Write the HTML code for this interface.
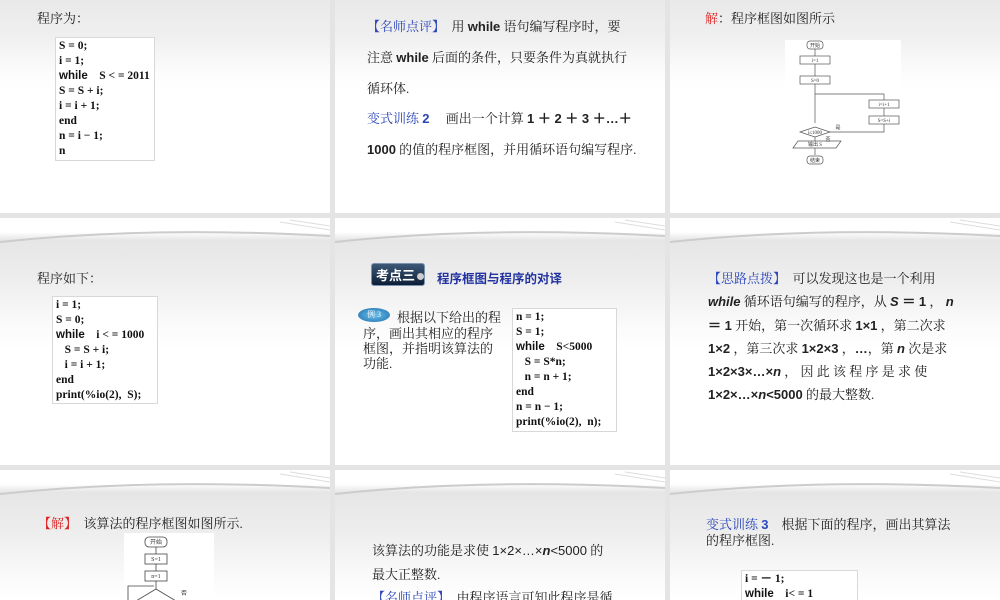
<!DOCTYPE html>
<html><head><meta charset="utf-8"><style>
*{margin:0;padding:0;box-sizing:border-box}
body{width:1000px;height:600px;background:#e4e4e4;position:relative;overflow:hidden;font-family:"Liberation Serif","Noto Serif CJK SC",serif;color:#222}
.s{position:absolute;width:330px;overflow:hidden;background:#fff}
.r1{top:0;height:213px;background:linear-gradient(#e9e9e9 0,#efefef 35px,#fbfbfb 70px,#fff 90px)}
.r2{top:218px;height:247px;background:linear-gradient(#fff 0,#fff 14px,#e6e6e6 22px,#ededed 60px,#fbfbfb 110px,#fff 130px)}
.r3{top:470px;height:130px;background:linear-gradient(#fff 0,#fff 14px,#e6e6e6 22px,#ededed 60px,#fbfbfb 110px,#fff 130px)}
.c1{left:0}.c2{left:335px}.c3{left:670px}
.t{position:absolute;font-size:13px;white-space:nowrap;line-height:16px}
.code{position:absolute;background:#fff;border:1px solid #d8d8d8;font-family:"Liberation Serif",serif;font-weight:bold;font-size:11.5px;line-height:15px;padding:1px 3px;white-space:pre;color:#111;overflow:hidden}
.code b{font-family:"Liberation Sans",sans-serif}
.sw{position:absolute;left:0;top:0}
.blue{color:#2b46b8}.red{color:#d22}
b.a{font-family:"Liberation Sans",sans-serif}
</style></head><body>
<!-- row1 -->
<div class="s r1 c1">
<div class="t" style="left:37px;top:11px">程序为：</div>
<div class="code" style="left:55px;top:37px;width:100px;height:124px">S = 0;
i = 1;
<b>while</b>    S &lt; = 2011
S = S + i;
i = i + 1;
end
n = i − 1;
n</div>
</div>
<div class="s r1 c2">
<div class="t" style="left:32px;top:19px"><span class="blue">【名师点评】</span>　用 <b class="a">while</b> 语句编写程序时，要</div>
<div class="t" style="left:32px;top:50px">注意 <b class="a">while</b> 后面的条件，只要条件为真就执行</div>
<div class="t" style="left:32px;top:81px">循环体.</div>
<div class="t" style="left:32px;top:111px"><span class="blue">变式训练 <b class="a">2</b></span>　 画出一个计算 <b class="a">1 ＋ 2 ＋ 3 ＋…＋</b></div>
<div class="t" style="left:32px;top:142px"><b class="a">1000</b> 的值的程序框图，并用循环语句编写程序.</div>
</div>
<div class="s r1 c3">
<div class="t" style="left:35px;top:11px"><span class="red">解</span>：程序框图如图所示</div>
<svg style="position:absolute;left:115px;top:40px" width="116" height="135" viewBox="0 0 116 135" font-size="5" font-family="Liberation Serif">
<rect width="116" height="135" fill="#fff"/>
<g fill="none" stroke="#555" stroke-width=".7">
<rect x="22" y="1" width="16" height="8" rx="3"/>
<rect x="15" y="16" width="30" height="8"/>
<rect x="15" y="36" width="30" height="8"/>
<rect x="84" y="60" width="30" height="8"/>
<rect x="84" y="76" width="30" height="8"/>
<path d="M30 9V16M30 24V36M30 44V83M30 54H99V60M99 68V76M99 84V92H45M30 97V101M30 108V115"/>
<path d="M15 92L30 87L45 92L30 97Z"/>
<path d="M8 108L13 101H56L51 108Z"/>
<rect x="22" y="116" width="16" height="8" rx="3"/>
</g>
<g fill="#333" text-anchor="middle"><text x="30" y="7">开始</text><text x="30" y="22">i=1</text><text x="30" y="42">S=0</text><text x="99" y="66">i=i+1</text><text x="99" y="82">S=S+i</text><text x="30" y="94">i≤1000</text><text x="30" y="106">输出 S</text><text x="30" y="122">结束</text><text x="53" y="89">是</text><text x="43" y="101">否</text></g>
</svg>
</div>
<!-- row2 -->
<div class="s r2 c1">
<svg class="sw" width="330" height="30"><path d="M0 24Q150 8 330 18" stroke="#ccc" stroke-width="2" fill="none"/><path d="M280 4L330 12M290 2L330 8" stroke="#ddd" fill="none"/></svg>
<div class="t" style="left:37px;top:53px">程序如下：</div>
<div class="code" style="left:52px;top:78px;width:106px;height:108px">i = 1;
S = 0;
<b>while</b>    i &lt; = 1000
   S = S + i;
   i = i + 1;
end
print(%io(2),  S);</div>
</div>
<div class="s r2 c2">
<svg class="sw" width="330" height="30"><path d="M0 24Q150 8 330 18" stroke="#ccc" stroke-width="2" fill="none"/><path d="M280 4L330 12M290 2L330 8" stroke="#ddd" fill="none"/></svg>
<div style="position:absolute;left:36px;top:45px;width:54px;height:23px;border-radius:3px;background:linear-gradient(#3d5878,#0d1e36);border:1px solid #7a93b0;color:#fff;font-weight:bold;font-size:13px;line-height:21px;padding-left:4px;font-family:'Noto Sans CJK SC',sans-serif">考点三<span style="display:inline-block;width:7px;height:7px;border-radius:50%;background:#ccc;margin-left:2px"></span></div>
<div class="t" style="left:102px;top:52px;color:#2233a0;font-family:'Noto Sans CJK SC',sans-serif;font-size:12.5px;font-weight:bold">程序框图与程序的对译</div>
<div style="position:absolute;left:23px;top:90px;width:32px;height:14px;border-radius:50%;background:radial-gradient(#6fc0e8,#1a6fb0);color:#fff;font-size:8px;text-align:center;line-height:14px">例 3</div>
<div class="t" style="left:62px;top:92px">根据以下给出的程</div>
<div class="t" style="left:28px;top:108px">序，画出其相应的程序</div>
<div class="t" style="left:28px;top:123px">框图，并指明该算法的</div>
<div class="t" style="left:28px;top:138px">功能.</div>
<div class="code" style="left:177px;top:90px;width:105px;height:124px">n = 1;
S = 1;
<b>while</b>    S&lt;5000
   S = S*n;
   n = n + 1;
end
n = n − 1;
print(%io(2),  n);</div>
</div>
<div class="s r2 c3">
<svg class="sw" width="330" height="30"><path d="M0 24Q150 8 330 18" stroke="#ccc" stroke-width="2" fill="none"/><path d="M280 4L330 12M290 2L330 8" stroke="#ddd" fill="none"/></svg>
<div class="t" style="left:38px;top:53px"><span class="blue">【思路点拨】</span>　可以发现这也是一个利用</div>
<div class="t" style="left:38px;top:76px"><b class="a"><i>while</i></b> 循环语句编写的程序，从 <b class="a"><i>S</i> ＝ 1</b> ，  <b class="a"><i>n</i></b></div>
<div class="t" style="left:38px;top:100px"><b class="a">＝ 1</b> 开始，第一次循环求 <b class="a">1×1</b> ，第二次求</div>
<div class="t" style="left:38px;top:123px"><b class="a">1×2</b> ，第三次求 <b class="a">1×2×3</b> ，<b class="a">…</b>，第 <b class="a"><i>n</i></b> 次是求</div>
<div class="t" style="left:38px;top:146px"><b class="a">1×2×3×…×<i>n</i></b> ， 因 此 该 程 序 是 求 使</div>
<div class="t" style="left:38px;top:169px"><b class="a">1×2×…×<i>n</i>&lt;5000</b> 的最大整数.</div>
</div>
<!-- row3 -->
<div class="s r3 c1">
<svg class="sw" width="330" height="30"><path d="M0 24Q150 8 330 18" stroke="#ccc" stroke-width="2" fill="none"/><path d="M280 4L330 12M290 2L330 8" stroke="#ddd" fill="none"/></svg>
<div class="t" style="left:38px;top:46px"><span class="red">【解】</span>　该算法的程序框图如图所示.</div>
<svg style="position:absolute;left:124px;top:63px" width="90" height="70" font-size="6" font-family="Liberation Serif">
<rect width="90" height="70" fill="#fff"/>
<g fill="none" stroke="#444" stroke-width=".8"><rect x="21" y="4" width="22" height="10" rx="4"/><rect x="21" y="21" width="22" height="10"/><rect x="21" y="38" width="22" height="10"/><path d="M32 14V21M32 31V38M32 48V56M32 56L12 68M32 56L52 68M4 70V53H30"/></g>
<g fill="#333" text-anchor="middle"><text x="32" y="11">开始</text><text x="32" y="28">S=1</text><text x="32" y="45">n=1</text><text x="60" y="62">否</text></g>
</svg>
</div>
<div class="s r3 c2">
<svg class="sw" width="330" height="30"><path d="M0 24Q150 8 330 18" stroke="#ccc" stroke-width="2" fill="none"/><path d="M280 4L330 12M290 2L330 8" stroke="#ddd" fill="none"/></svg>
<div class="t" style="left:37px;top:73px">该算法的功能是求使 <span style="font-family:'Liberation Sans',sans-serif">1×2×…×<i><b>n</b></i>&lt;5000</span> 的</div>
<div class="t" style="left:37px;top:97px">最大正整数.</div>
<div class="t" style="left:37px;top:120px"><span class="blue">【名师点评】</span>　由程序语言可知此程序是循</div>
</div>
<div class="s r3 c3">
<svg class="sw" width="330" height="30"><path d="M0 24Q150 8 330 18" stroke="#ccc" stroke-width="2" fill="none"/><path d="M280 4L330 12M290 2L330 8" stroke="#ddd" fill="none"/></svg>
<div class="t" style="left:36px;top:47px"><span class="blue">变式训练 <b class="a">3</b></span>　根据下面的程序，画出其算法</div>
<div class="t" style="left:36px;top:63px">的程序框图.</div>
<div class="code" style="left:71px;top:100px;width:117px;height:40px">i = － 1;
<b>while</b>    i&lt; = 1</div>
</div>
</body></html>
